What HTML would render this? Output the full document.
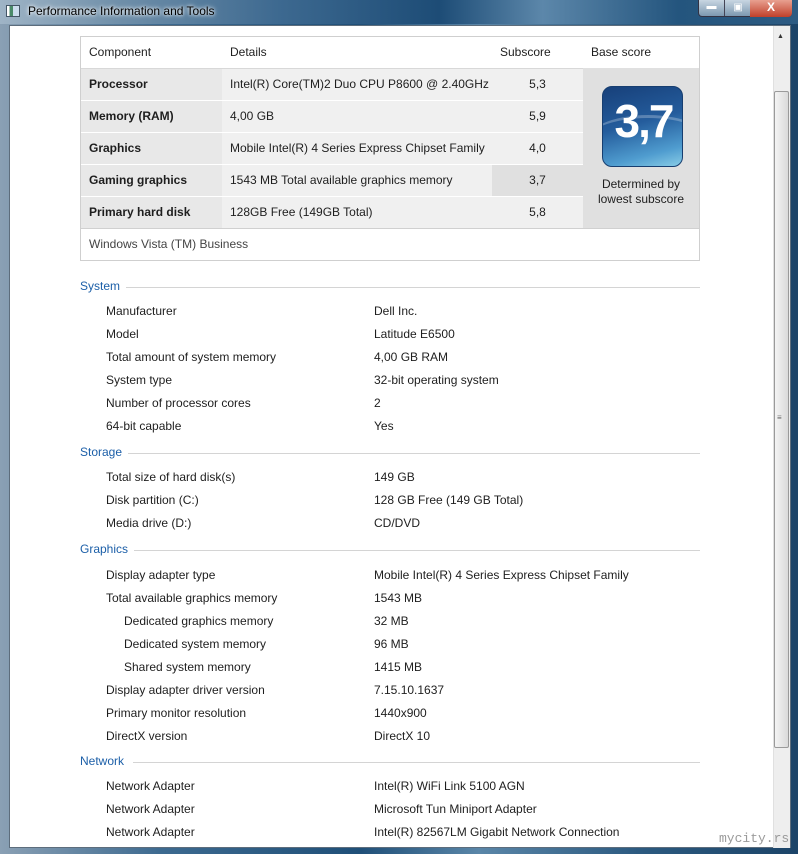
<!DOCTYPE html>
<html><head><meta charset="utf-8"><style>
*{margin:0;padding:0;box-sizing:border-box}
body{width:798px;height:854px;overflow:hidden;position:relative;font-family:"Liberation Sans",sans-serif;font-size:12px;color:#1e1e1e;background:#2a4a6a}
.frame{position:absolute;left:0;top:0;width:798px;height:854px;background:linear-gradient(90deg,#8aa0b4 0%,#3d6a90 20%,#1f4f78 45%,#5a86a8 60%,#2c5a80 80%,#1c4468 100%)}
.tb{position:absolute;left:0;top:0;width:798px;height:24px;background:linear-gradient(90deg,#9fb4c6 0,#6f8fa9 15%,#3d6990 35%,#1d4c76 55%,#5c87aa 68%,#24557e 85%,#2d5b82 100%)}
.title{position:absolute;left:28px;top:4px;color:#000;font-size:12px;text-shadow:0 0 6px #fff,0 0 3px #fff}
.client{position:absolute;left:9px;top:25px;width:782px;height:823px;background:#fff;border:1px solid #5d6d7c}
.sb{position:absolute;left:773px;top:26px;width:17px;height:822px;background:#eeeeee;border-left:1px solid #e0e0e0}
.thumb{position:absolute;left:774px;top:91px;width:15px;height:657px;background:linear-gradient(90deg,#f4f4f4,#dadada);border:1px solid #9a9a9a;border-radius:2px}
.a{position:absolute;white-space:nowrap;line-height:18px;height:18px}
.tbl{position:absolute;left:80px;top:36px;width:620px;height:225px;border:1px solid #cfcfcf;background:#fff}
.c{position:absolute;line-height:31px;height:31px;padding-left:8px;white-space:nowrap}
.h{color:#1c5fa8;font-size:12px}
.line{position:absolute;height:1px;background:#d4d4d4}
</style></head><body>
<div class="frame"></div>
<div class="tb"></div>
<div style="position:absolute;left:6px;top:5px;width:14px;height:12px;background:linear-gradient(90deg,#fff 0,#fff 20%,#4a8a6a 20%,#4a8a6a 50%,#cde 50%);border:1px solid #456"></div>
<div class="title">Performance Information and Tools</div>
<div style="position:absolute;left:698px;top:0;width:94px;height:17px;border:1px solid #334;border-top:none;border-radius:0 0 4px 4px;background:linear-gradient(#c8d6e2,#7d98b0)"></div>
<div style="position:absolute;left:699px;top:0;width:26px;height:16px;border-right:1px solid #445;color:#fff;font-size:10px;text-align:center;line-height:14px">▬</div>
<div style="position:absolute;left:726px;top:0;width:24px;height:16px;color:#fff;font-size:10px;text-align:center;line-height:15px">▣</div>
<div style="position:absolute;left:750px;top:0;width:42px;height:17px;background:linear-gradient(#e8a090,#c0402a);border-radius:0 0 4px 0;color:#fff;font-weight:bold;font-size:12px;text-align:center;line-height:15px">X</div>
<div class="client"></div>
<div class="sb"></div>
<div style="position:absolute;left:777px;top:33px;font-size:7px;color:#333">▲</div>
<div class="thumb"></div>
<div style="position:absolute;left:777px;top:413px;font-size:8px;color:#666">≡</div>

<div class="tbl">
<div class="c" style="left:0;top:0">Component</div>
<div class="c" style="left:141px;top:0">Details</div>
<div class="c" style="left:411px;top:0">Subscore</div>
<div class="c" style="left:502px;top:0">Base score</div>
<div style="position:absolute;left:0;top:31px;width:618px;height:1px;background:#d8d8d8"></div>
<div style="position:absolute;left:502px;top:31px;width:116px;height:160px;background:#e0e0e0"></div>

<div class="c" style="left:0;top:32px;width:141px;background:#e8e8e8;font-weight:bold">Processor</div>
<div class="c" style="left:141px;top:32px;width:270px;background:#f0f0f0">Intel(R) Core(TM)2 Duo CPU P8600 @ 2.40GHz</div>
<div class="c" style="left:411px;top:32px;width:91px;background:#f0f0f0;text-align:center;padding:0">5,3</div>

<div class="c" style="left:0;top:64px;width:141px;background:#e8e8e8;font-weight:bold">Memory (RAM)</div>
<div class="c" style="left:141px;top:64px;width:270px;background:#f0f0f0">4,00 GB</div>
<div class="c" style="left:411px;top:64px;width:91px;background:#f0f0f0;text-align:center;padding:0">5,9</div>

<div class="c" style="left:0;top:96px;width:141px;background:#e8e8e8;font-weight:bold">Graphics</div>
<div class="c" style="left:141px;top:96px;width:270px;background:#f0f0f0">Mobile Intel(R) 4 Series Express Chipset Family</div>
<div class="c" style="left:411px;top:96px;width:91px;background:#f0f0f0;text-align:center;padding:0">4,0</div>

<div class="c" style="left:0;top:128px;width:141px;background:#e8e8e8;font-weight:bold">Gaming graphics</div>
<div class="c" style="left:141px;top:128px;width:270px;background:#f0f0f0">1543 MB Total available graphics memory</div>
<div class="c" style="left:411px;top:128px;width:91px;background:#e0e0e0;text-align:center;padding:0">3,7</div>

<div class="c" style="left:0;top:160px;width:141px;background:#e8e8e8;font-weight:bold">Primary hard disk</div>
<div class="c" style="left:141px;top:160px;width:270px;background:#f0f0f0">128GB Free (149GB Total)</div>
<div class="c" style="left:411px;top:160px;width:91px;background:#f0f0f0;text-align:center;padding:0">5,8</div>

<div style="position:absolute;left:0;top:191px;width:618px;height:1px;background:#d0d0d0"></div>
<div class="c" style="left:0;top:192px;color:#444">Windows Vista (TM) Business</div>

<div style="position:absolute;left:521px;top:49px;width:81px;height:81px;border-radius:10px;background:linear-gradient(165deg,#17407a 0%,#245c9c 45%,#4f9ccf 80%,#88cce6 100%);overflow:hidden;border:1px solid #173e70">
<div style="position:absolute;left:-20px;top:28px;width:130px;height:60px;border-radius:50%;border-top:3px solid rgba(255,255,255,.25)"></div>
<div style="position:absolute;left:0;top:6px;width:81px;text-align:center;color:#fff;font-weight:bold;font-size:46px;line-height:56px;letter-spacing:-2px">3,7</div>
</div>
<div style="position:absolute;left:502px;top:140px;width:116px;text-align:center;line-height:15px">Determined by<br>lowest subscore</div>
</div>

<div class="a h" style="left:80px;top:277px">System</div><div class="line" style="left:126px;top:287px;width:574px"></div>
<div class="a" style="left:106px;top:302px">Manufacturer</div><div class="a" style="left:374px;top:302px">Dell Inc.</div>
<div class="a" style="left:106px;top:325px">Model</div><div class="a" style="left:374px;top:325px">Latitude E6500</div>
<div class="a" style="left:106px;top:348px">Total amount of system memory</div><div class="a" style="left:374px;top:348px">4,00 GB RAM</div>
<div class="a" style="left:106px;top:371px">System type</div><div class="a" style="left:374px;top:371px">32-bit operating system</div>
<div class="a" style="left:106px;top:394px">Number of processor cores</div><div class="a" style="left:374px;top:394px">2</div>
<div class="a" style="left:106px;top:417px">64-bit capable</div><div class="a" style="left:374px;top:417px">Yes</div>

<div class="a h" style="left:80px;top:443px">Storage</div><div class="line" style="left:128px;top:453px;width:572px"></div>
<div class="a" style="left:106px;top:468px">Total size of hard disk(s)</div><div class="a" style="left:374px;top:468px">149 GB</div>
<div class="a" style="left:106px;top:491px">Disk partition (C:)</div><div class="a" style="left:374px;top:491px">128 GB Free (149 GB Total)</div>
<div class="a" style="left:106px;top:514px">Media drive (D:)</div><div class="a" style="left:374px;top:514px">CD/DVD</div>

<div class="a h" style="left:80px;top:540px">Graphics</div><div class="line" style="left:134px;top:550px;width:566px"></div>
<div class="a" style="left:106px;top:566px">Display adapter type</div><div class="a" style="left:374px;top:566px">Mobile Intel(R) 4 Series Express Chipset Family</div>
<div class="a" style="left:106px;top:589px">Total available graphics memory</div><div class="a" style="left:374px;top:589px">1543 MB</div>
<div class="a" style="left:124px;top:612px">Dedicated graphics memory</div><div class="a" style="left:374px;top:612px">32 MB</div>
<div class="a" style="left:124px;top:635px">Dedicated system memory</div><div class="a" style="left:374px;top:635px">96 MB</div>
<div class="a" style="left:124px;top:658px">Shared system memory</div><div class="a" style="left:374px;top:658px">1415 MB</div>
<div class="a" style="left:106px;top:681px">Display adapter driver version</div><div class="a" style="left:374px;top:681px">7.15.10.1637</div>
<div class="a" style="left:106px;top:704px">Primary monitor resolution</div><div class="a" style="left:374px;top:704px">1440x900</div>
<div class="a" style="left:106px;top:727px">DirectX version</div><div class="a" style="left:374px;top:727px">DirectX 10</div>

<div class="a h" style="left:80px;top:752px">Network</div><div class="line" style="left:133px;top:762px;width:567px"></div>
<div class="a" style="left:106px;top:777px">Network Adapter</div><div class="a" style="left:374px;top:777px">Intel(R) WiFi Link 5100 AGN</div>
<div class="a" style="left:106px;top:800px">Network Adapter</div><div class="a" style="left:374px;top:800px">Microsoft Tun Miniport Adapter</div>
<div class="a" style="left:106px;top:823px">Network Adapter</div><div class="a" style="left:374px;top:823px">Intel(R) 82567LM Gigabit Network Connection</div>

<div class="a" style="left:719px;top:830px;font-family:'Liberation Mono',monospace;font-size:13px;color:#9a9a9a">mycity.rs</div>
</body></html>
